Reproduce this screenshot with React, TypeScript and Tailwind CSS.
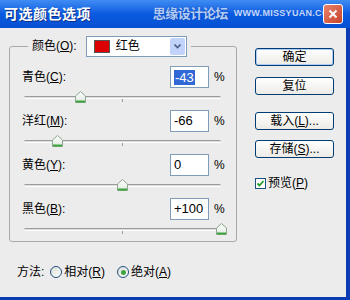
import React from 'react';

const FONT = "'Liberation Sans', 'Noto Sans CJK SC', sans-serif";

const Thumb = ({ value }: { value: number }) => {
  // track runs 197px wide; thumb centre follows value -100..100
  const left = ((value + 100) / 200) * 197 - 5.5;
  return (
    <svg
      width="11"
      height="12"
      viewBox="0 0 11 12"
      className="absolute top-0"
      style={{ left }}
    >
      <defs>
        <linearGradient id="thumbFill" x1="0" y1="0" x2="0" y2="1">
          <stop offset="0" stopColor="#ffffff" />
          <stop offset="1" stopColor="#dfe9df" />
        </linearGradient>
      </defs>
      <path
        d="M0.5 5 L5.5 0.5 L10.5 5 V11.5 H0.5 Z"
        fill="url(#thumbFill)"
        stroke="#8ea690"
        strokeWidth="1"
      />
      <rect x="1" y="9.5" width="9" height="2" fill="#3fa53f" />
    </svg>
  );
};

const Slider = ({ value }: { value: number }) => (
  <div className="relative ml-[2px] mt-[3px] h-[12px] w-[197px]">
    <div className="absolute left-0 right-0 top-[5px] h-[3px] rounded-full border-t border-[#9c9c9c] border-b border-b-white bg-[#dcdcdc]" />
    <div className="absolute left-[98px] top-[8px] h-[3px] w-px bg-[#9c9c9c]" />
    <Thumb value={value} />
  </div>
);

const Label = ({ name, hot }: { name: string; hot: string }) => (
  <span className="text-[12px] text-black">
    {name}(<span className="underline">{hot}</span>):
  </span>
);

interface RowProps {
  name: string;
  hot: string;
  value: string;
  num: number;
  selected?: boolean;
  last?: boolean;
}

const ColorRow = ({ name, hot, value, num, selected, last }: RowProps) => (
  <div className={last ? '' : 'mb-[7px]'}>
    <div className="flex h-[22px] items-center">
      <Label name={name} hot={hot} />
      <div className="ml-auto flex h-[22px] w-[39px] items-center border border-[#7f9db9] bg-white pl-[3px] text-[13px]">
        {selected ? (
          <span className="bg-[#3168d5] px-[1px] leading-[15px] text-white">{value}</span>
        ) : (
          <span className="text-black">{value}</span>
        )}
      </div>
      <span className="ml-[5px] w-[10px] text-[12px] text-black">%</span>
    </div>
    <Slider value={num} />
  </div>
);

const XpButton = ({
  children,
  primary,
  className = '',
}: {
  children: React.ReactNode;
  primary?: boolean;
  className?: string;
}) => (
  <div
    className={`flex h-[18px] w-[79px] items-center justify-center rounded-[3px] border border-[#003c74] bg-gradient-to-b from-white to-[#ecebe6] text-[12px] text-black ${
      primary ? 'shadow-[inset_0_0_0_1px_#aecbf7]' : ''
    } ${className}`}
  >
    {children}
  </div>
);

const Radio = ({ checked, children }: { checked?: boolean; children: React.ReactNode }) => (
  <div className="flex items-center gap-[2px]">
    <span className="flex h-[12px] w-[12px] items-center justify-center rounded-full border border-[#1c5180] bg-gradient-to-br from-[#dcdcd7] to-white">
      {checked && <span className="h-[5px] w-[5px] rounded-full bg-[#3fa63f]" />}
    </span>
    <span className="text-[12px] text-black">{children}</span>
  </div>
);

export default function App() {
  return (
    <div
      className="flex h-[300px] w-[350px] flex-col overflow-hidden bg-[#ececec]"
      style={{ fontFamily: FONT }}
    >
      {/* Title bar */}
      <div className="flex h-[28px] items-center bg-gradient-to-b from-[#3f8cf3] via-[#0a5ae0] to-[#0750d2] pl-[4px] pr-[7px]">
        <span className="text-[14px] font-bold tracking-[0.5px] text-white [text-shadow:1px_1px_0_#0b2f86]">
          可选颜色选项
        </span>
        <span className="ml-auto text-[13px] font-bold tracking-[-0.5px] text-[#b3cdf7] [text-shadow:0_0_1px_#1a3f9c]">
          思缘设计论坛
        </span>
        <span className="ml-[6px] text-[9px] font-bold tracking-[0.3px] text-[#c3d6f8]">
          WWW.MISSYUAN.COM
        </span>
        <div className="ml-[-14px] flex h-[20px] w-[20px] items-center justify-center rounded-[3px] border border-white bg-gradient-to-br from-[#e8836a] to-[#c8402a]">
          <svg width="10" height="10" viewBox="0 0 10 10">
            <path d="M1.5 1.5 L8.5 8.5 M8.5 1.5 L1.5 8.5" stroke="white" strokeWidth="2" />
          </svg>
        </div>
      </div>

      {/* Body */}
      <div className="flex flex-1 border-b-[3px] border-r-4 border-[#0c3cb4]">
        <div className="w-[237px] pl-[9px] pt-[7px]">
          <fieldset className="rounded-[3px] border border-[#a9a9a9] px-[12px] pb-[6px]">
            <legend className="ml-[6px] px-[4px]">
              <div className="flex h-[22px] items-center">
                <Label name="颜色" hot="O" />
                <div className="ml-[9px] flex h-[21px] w-[101px] items-center border border-[#7f9db9] bg-white">
                  <span className="ml-[7px] h-[13px] w-[16px] border border-[#555] bg-[#dd0000]" />
                  <span className="ml-[6px] text-[12px] text-black">红色</span>
                  <span className="ml-auto mr-[1px] flex h-[17px] w-[15px] items-center justify-center rounded-[2px] bg-[#c1d3fb]">
                    <svg width="7" height="5" viewBox="0 0 7 5">
                      <path d="M0.5 0.5 L3.5 3.5 L6.5 0.5" fill="none" stroke="#4d6185" strokeWidth="1.6" />
                    </svg>
                  </span>
                </div>
              </div>
            </legend>
            <div className="pt-[9px]">
              <ColorRow name="青色" hot="C" value="-43" num={-43} selected />
              <ColorRow name="洋红" hot="M" value="-66" num={-66} />
              <ColorRow name="黄色" hot="Y" value="0" num={0} />
              <ColorRow name="黑色" hot="B" value="+100" num={100} last />
            </div>
          </fieldset>

          <div className="ml-[8px] mt-[22px] flex h-[16px] items-center gap-[12px]">
            <div className="flex items-center gap-[6px]">
              <span className="text-[12px] text-black">方法:</span>
              <Radio>
                相对(<span className="underline">R</span>)
              </Radio>
            </div>
            <Radio checked>
              绝对(<span className="underline">A</span>)
            </Radio>
          </div>
        </div>

        <div className="flex flex-col pl-[18px] pt-[20px]">
          <XpButton primary>确定</XpButton>
          <XpButton className="mt-[11px]">复位</XpButton>
          <XpButton className="mt-[17px]">
            载入(<span className="underline">L</span>)...
          </XpButton>
          <XpButton className="mt-[10px]">
            存储(<span className="underline">S</span>)...
          </XpButton>
          <div className="mt-[16px] flex items-center gap-[2px]">
            <span className="flex h-[11px] w-[11px] items-center justify-center border border-[#1c5180] bg-white">
              <svg width="9" height="9" viewBox="0 0 9 9">
                <path d="M1.5 4.5 L3.5 6.5 L7.5 2" fill="none" stroke="#21a121" strokeWidth="1.8" />
              </svg>
            </span>
            <span className="text-[12px] text-black">
              预览(<span className="underline">P</span>)
            </span>
          </div>
        </div>
      </div>
    </div>
  );
}
